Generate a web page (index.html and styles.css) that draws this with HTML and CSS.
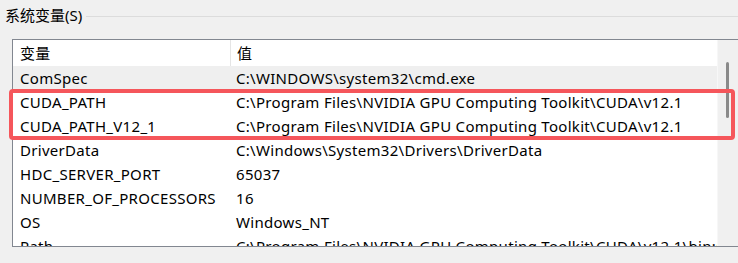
FILE: index.html
```html
<!DOCTYPE html>
<html lang="zh-CN">
<head>
    <meta charset="UTF-8">
    <meta name="viewport" content="width=device-width, initial-scale=1.0">
    <title>系统变量</title>
    <link rel="stylesheet" href="styles.css">
</head>
<body>
    <div class="group">
        <div class="group-title">
            <span class="title-text">系统变量(S)</span>
            <span class="title-line"></span>
        </div>

        <div class="list">
            <div class="table">
                <div class="row header">
                    <div class="cell name">变量</div>
                    <div class="cell value">值</div>
                </div>
                <div class="row selected">
                    <div class="cell name">ComSpec</div>
                    <div class="cell value">C:\WINDOWS\system32\cmd.exe</div>
                </div>
                <div class="row">
                    <div class="cell name">CUDA_PATH</div>
                    <div class="cell value">C:\Program Files\NVIDIA GPU Computing Toolkit\CUDA\v12.1</div>
                </div>
                <div class="row">
                    <div class="cell name">CUDA_PATH_V12_1</div>
                    <div class="cell value">C:\Program Files\NVIDIA GPU Computing Toolkit\CUDA\v12.1</div>
                </div>
                <div class="row">
                    <div class="cell name">DriverData</div>
                    <div class="cell value">C:\Windows\System32\Drivers\DriverData</div>
                </div>
                <div class="row">
                    <div class="cell name">HDC_SERVER_PORT</div>
                    <div class="cell value">65037</div>
                </div>
                <div class="row">
                    <div class="cell name">NUMBER_OF_PROCESSORS</div>
                    <div class="cell value">16</div>
                </div>
                <div class="row">
                    <div class="cell name">OS</div>
                    <div class="cell value">Windows_NT</div>
                </div>
                <div class="row">
                    <div class="cell name">Path</div>
                    <div class="cell value">C:\Program Files\NVIDIA GPU Computing Toolkit\CUDA\v12.1\bin;C:\Program Files\NVIDIA</div>
                </div>
            </div>
            <div class="scrollbar">
                <div class="thumb"></div>
            </div>
        </div>

        <!-- red annotation around the two CUDA rows -->
        <div class="mark"></div>
    </div>
</body>
</html>
```

FILE: styles.css
```css
body {
    margin: 0;
    padding: 0;
    background-color: #f0f0f0;
    font-family: "Noto Sans", "Noto Sans CJK SC", sans-serif;
    font-size: 15px;
    letter-spacing: 0.3px;
    color: #000;
    overflow: hidden;
}
.group {
    position: relative;
    width: 738px;
    height: 263px;
}
.group-title {
    display: flex;
    align-items: center;
    height: 31px;
    padding-left: 5px;
}
.title-text {
    font-size: 15px;
    letter-spacing: 0;
    line-height: 20px;
    margin-top: -1px;
}
.title-line {
    flex: 1;
    height: 1px;
    margin-left: 4px;
    margin-top: 1px;
    background-color: #dcdcdc;
}
.list {
    display: flex;
    margin-top: 8px;
    margin-left: 12px;
    width: 725px;
    height: 206px;
    border: 1px solid #828790;
    background-color: #fff;
    overflow: hidden;
}
.table {
    width: 705px;
    overflow: hidden;
}
.row {
    display: flex;
    height: 24px;
    align-items: center;
    white-space: nowrap;
}
.row.header {
    height: 26px;
}
.row.selected {
    background-color: #efefef;
}
.cell.name {
    width: 210px;
    padding-left: 7px;
    flex-shrink: 0;
    overflow: hidden;
}
.cell.value {
    padding-left: 6px;
}
.header .cell.name {
    height: 26px;
    line-height: 26px;
    border-right: 1px solid #e5e5e5;
}
.header .cell.value {
    line-height: 26px;
}
.scrollbar {
    width: 20px;
    background-color: #f0f0f0;
    border-left: 1px solid #f7f7f7;
}
.thumb {
    width: 3px;
    height: 56px;
    margin-top: 22px;
    margin-left: 8px;
    background-color: #8a8a8a;
    border-radius: 2px;
}
.mark {
    position: absolute;
    left: 9px;
    top: 89px;
    width: 718px;
    height: 43px;
    border: 4px solid #f5565b;
    border-radius: 4px;
}
```
